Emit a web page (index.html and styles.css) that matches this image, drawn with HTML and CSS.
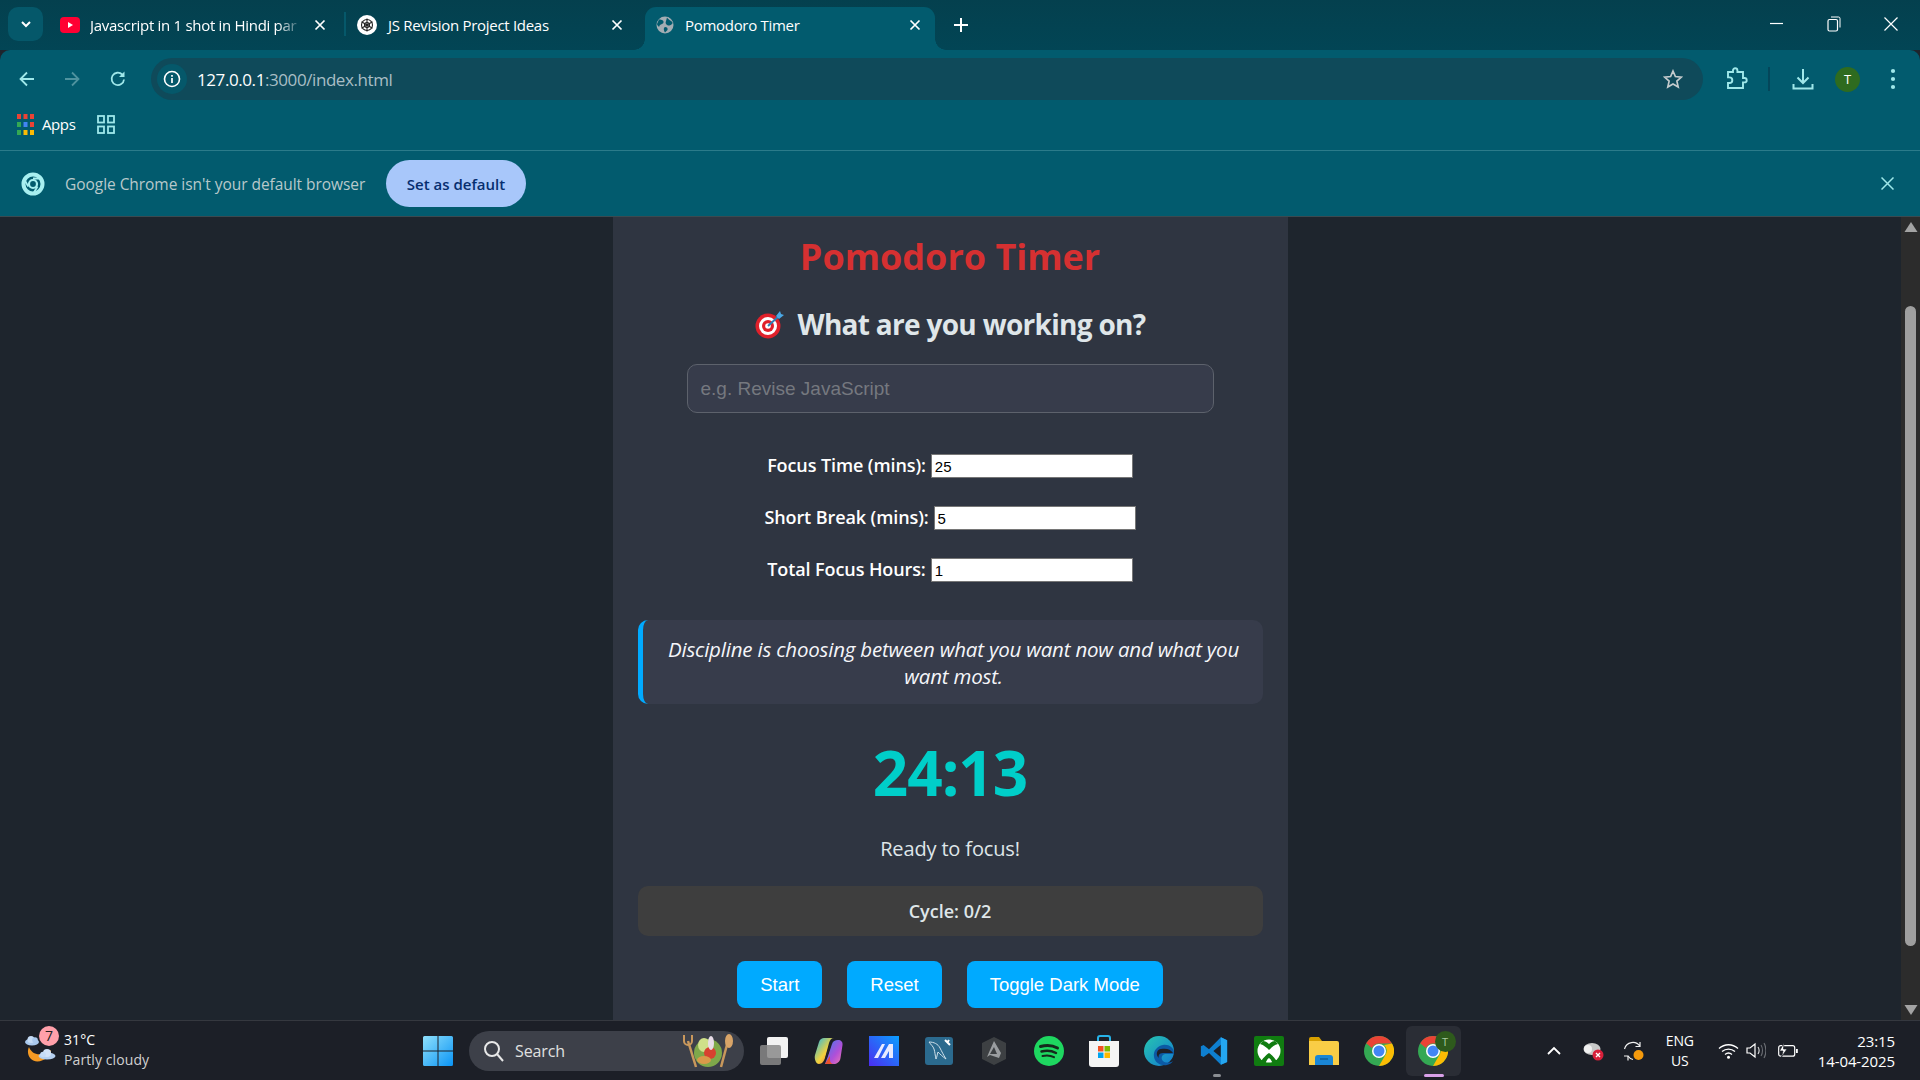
FILE: index.html
```html
<!DOCTYPE html>
<html lang="en">
<head>
<meta charset="utf-8">
<title>Pomodoro Timer</title>
<link rel="stylesheet" href="styles.css">
</head>
<body>
<header class="tabstrip">
  <button class="tabsearch"><svg width="14" height="14" viewBox="0 0 14 14"><path d="M3 5l4 4 4-4" fill="none" stroke="#fff" stroke-width="2"/></svg></button>
  <div class="tab tab-one">
    <svg class="favicon" width="20" height="20" viewBox="0 0 20 20"><rect y="2" width="20" height="16" rx="4" fill="#ff0033"/><path d="M8 7l5 3-5 3z" fill="#fff"/></svg>
    <span class="tabtitle fade">Javascript in 1 shot in Hindi par</span>
    <svg class="tabclose" width="12" height="12" viewBox="0 0 12 12"><path d="M1.500 1.500l9 9M10.500 1.500l-9 9" stroke="#fff" stroke-width="1.700"/></svg>
  </div>
  <div class="tabdiv"></div>
  <div class="tab tab-two">
    <svg class="favicon" width="20" height="20" viewBox="0 0 20 20"><circle cx="10" cy="10" r="10" fill="#fff"/><g fill="none" stroke="#222" stroke-width="1.100"><circle cx="10" cy="10" r="5.500"/><path d="M10 3.500v13M4.500 6.800l11 6.400M15.500 6.800l-11 6.400"/><circle cx="10" cy="10" r="2.500"/></g></svg>
    <span class="tabtitle">JS Revision Project Ideas</span>
    <svg class="tabclose" width="12" height="12" viewBox="0 0 12 12"><path d="M1.500 1.500l9 9M10.500 1.500l-9 9" stroke="#fff" stroke-width="1.700"/></svg>
  </div>
  <div class="tab tab-active">
    <svg class="favicon" width="18" height="18" viewBox="0 0 18 18"><circle cx="9" cy="9" r="8.500" fill="#a3adb3"/><path d="M3 3.500c3 0 5 1 4.500 3S4 8 3.500 10 1 9 1 8zM11 1.500c2 3 5 3.500 5.500 5S14 10 12 9.500 9 7 10 5zM9 11c2 0 3 1 2.500 3L9 16.500C8 15 7 12 9 11z" fill="#025b6e"/></svg>
    <span class="tabtitle">Pomodoro Timer</span>
    <svg class="tabclose" width="12" height="12" viewBox="0 0 12 12"><path d="M1.500 1.500l9 9M10.500 1.500l-9 9" stroke="#fff" stroke-width="1.700"/></svg>
  </div>
  <svg class="newtab" width="14" height="14" viewBox="0 0 14 14"><path d="M7 0v14M0 7h14" stroke="#fff" stroke-width="2"/></svg>
  <div class="winctl">
    <svg width="14" height="14" viewBox="0 0 14 14"><path d="M0 6.500h13" stroke="#fff" stroke-width="1.200"/></svg>
    <svg width="14" height="16" viewBox="0 0 14 16"><rect x="1" y="3.500" width="9.500" height="11.500" rx="1.500" fill="none" stroke="#fff" stroke-width="1.200"/><path d="M4 1h7.500a1.500 1.500 0 0 1 1.500 1.500v9" fill="none" stroke="#fff" stroke-width="1"/></svg>
    <svg width="14" height="14" viewBox="0 0 14 14"><path d="M.5.500l13 13M13.500.500l-13 13" stroke="#fff" stroke-width="1.200"/></svg>
  </div>
</header>

<nav class="toolbar">
  <svg class="navicon" width="18" height="18" viewBox="0 0 18 18"><path d="M16 9H3M9 2.500L2.500 9 9 15.500" fill="none" stroke="#9fe8ea" stroke-width="1.800"/></svg>
  <svg class="navicon" width="18" height="18" viewBox="0 0 18 18"><path d="M2 9h13M9 2.500L15.500 9 9 15.500" fill="none" stroke="#4f939f" stroke-width="1.800"/></svg>
  <svg class="navicon" width="18" height="18" viewBox="0 0 18 18"><path d="M15 9.500A6.200 6.200 0 1 1 13.200 4.500" fill="none" stroke="#9fe8ea" stroke-width="1.800"/><path d="M15.500 1.500v5.500H10z" fill="#9fe8ea"/></svg>
  <div class="omnibox">
    <span class="siteinfo"><svg width="18" height="18" viewBox="0 0 18 18"><circle cx="9" cy="9" r="7.500" fill="none" stroke="#fff" stroke-width="1.600"/><path d="M9 8v5M9 5v1.800" stroke="#fff" stroke-width="1.700"/></svg></span>
    <span class="url"><span class="host">127.0.0.1</span>:3000/index.html</span>
    <svg class="star" width="20" height="20" viewBox="0 0 20 20"><path d="M10 2l2.400 5.500 6 .6-4.500 4 1.300 5.900L10 15l-5.200 3 1.300-5.900-4.500-4 6-.6z" fill="none" stroke="#c4cbcd" stroke-width="1.700"/></svg>
  </div>
  <svg class="tool-ext" width="22" height="24" viewBox="0 0 22 24"><path d="M2 5h5V3.500a2.200 2.200 0 0 1 4.400 0V5H17v6h1.500a2.200 2.200 0 0 1 0 4.400H17V21H2v-5h1.500a2.800 2.800 0 0 0 0-5.600H2z" fill="none" stroke="#9fe8ea" stroke-width="1.900"/></svg>
  <span class="tooldiv"></span>
  <svg class="tool-dl" width="22" height="24" viewBox="0 0 22 24"><path d="M11 2v14M5.500 10.500L11 16l5.500-5.500" fill="none" stroke="#9fe8ea" stroke-width="2"/><path d="M1.500 17v4.500h19V17" fill="none" stroke="#9fe8ea" stroke-width="2"/></svg>
  <span class="avatar">T</span>
  <svg class="tool-menu" width="6" height="22" viewBox="0 0 6 22"><circle cx="3" cy="3" r="2.100" fill="#9fe8ea"/><circle cx="3" cy="11" r="2.100" fill="#9fe8ea"/><circle cx="3" cy="19" r="2.100" fill="#9fe8ea"/></svg>
</nav>

<div class="bookmarks">
  <svg class="appsgrid" width="17" height="21" viewBox="0 0 17 21"><g fill="#ea4335"><rect width="4" height="5"/><rect x="6.500" width="4" height="5"/><rect x="13" width="4" height="5"/></g><rect y="8" width="4" height="5" fill="#34a853"/><rect x="6.500" y="8" width="4" height="5" fill="#4285f4"/><rect x="13" y="8" width="4" height="5" fill="#ea4335"/><rect y="16" width="4" height="5" fill="#34a853"/><rect x="6.500" y="16" width="4" height="5" fill="#fbbc04"/><rect x="13" y="16" width="4" height="5" fill="#fbbc04"/></svg>
  <span class="bm-label">Apps</span>
  <svg class="groups" width="18" height="19" viewBox="0 0 18 19"><g fill="none" stroke="#9fe8ea" stroke-width="1.800"><rect x="1" y="1" width="6" height="6.500"/><rect x="11" y="1" width="6" height="6.500"/><rect x="1" y="11.500" width="6" height="6.500"/><rect x="11" y="11.500" width="6" height="6.500"/></g></svg>
</div>

<div class="infobar">
  <svg class="chromeglyph" width="24" height="24" viewBox="0 0 24 24"><circle cx="12" cy="12" r="9.500" fill="none" stroke="#a8eff0" stroke-width="4"/><circle cx="12" cy="12" r="4" fill="none" stroke="#a8eff0" stroke-width="2.200"/><path d="M12 6.500h9M7.300 14.500L3 7M16.500 14.500L12 22" stroke="#a8eff0" stroke-width="1.800"/></svg>
  <span class="infotext">Google Chrome isn't your default browser</span>
  <button class="setdefault">Set as default</button>
  <svg class="infoclose" width="13" height="13" viewBox="0 0 13 13"><path d="M.5.500l12 12M12.500.500l-12 12" stroke="#9fe8ea" stroke-width="1.500"/></svg>
</div>

<div class="viewport">
  <main class="stage">
    <section class="card">
      <h1 class="title">Pomodoro Timer</h1>
      <h2 class="goal">
        <svg width="30" height="30" viewBox="0 0 30 30"><circle cx="13" cy="17" r="12.500" fill="#e0202a"/><circle cx="13" cy="17" r="9" fill="#fff"/><circle cx="13" cy="17" r="6" fill="#e0202a"/><circle cx="13" cy="17" r="2.800" fill="#fff"/><path d="M13 17L25 6" stroke="#2f7fb5" stroke-width="2"/><path d="M21 7l4-5 1 3 3 1-5 4z" fill="#4aa8e6"/></svg>
        <span>What are you working on?</span>
      </h2>
      <input class="taskinput" type="text" placeholder="e.g. Revise JavaScript">
      <div class="setting"><label>Focus Time (mins):</label><input class="num" type="text" value="25"></div>
      <div class="setting"><label>Short Break (mins):</label><input class="num" type="text" value="5"></div>
      <div class="setting"><label>Total Focus Hours:</label><input class="num" type="text" value="1"></div>
      <blockquote class="quote">Discipline is choosing between what you want now and what you want most.</blockquote>
      <div class="timer">24:13</div>
      <p class="status">Ready to focus!</p>
      <div class="cycle">Cycle: 0/2</div>
      <div class="actions">
        <button class="btn">Start</button>
        <button class="btn">Reset</button>
        <button class="btn">Toggle Dark Mode</button>
      </div>
    </section>
  </main>
  <aside class="scrollbar">
    <svg width="14" height="10" viewBox="0 0 14 10"><path d="M7 0l6.500 10H.5z" fill="#a3a3a3"/></svg>
    <div class="scrolltrack"><div class="thumb"></div></div>
    <svg width="14" height="10" viewBox="0 0 14 10"><path d="M7 10L.5 0h13z" fill="#a3a3a3"/></svg>
  </aside>
</div>

<footer class="taskbar">
  <div class="weather">
    <div class="wx-icon">
      <svg width="36" height="36" viewBox="0 0 36 36"><path d="M6 13c3 8 12 10 22 3 0 3-1 5-3 7-6 5-13 6-17 2-3-3-4-8-2-12z" fill="#f59a23"/><ellipse cx="9" cy="8" rx="7" ry="3.500" fill="#a9c9ee"/><circle cx="8" cy="5.500" r="3.500" fill="#c6dcf6"/><circle cx="12" cy="6" r="2.800" fill="#a9c9ee"/><ellipse cx="24" cy="22" rx="8.500" ry="3.500" fill="#b5d0f0"/><circle cx="24" cy="19" r="4" fill="#d3e3f8"/><circle cx="20" cy="20.500" r="2.800" fill="#c6dcf6"/></svg>
      <span class="badge">7</span>
    </div>
    <div class="wx-text"><span>31°C</span><span class="wx-sub">Partly cloudy</span></div>
  </div>
  <div class="dock">
    <svg class="winlogo" width="30" height="30" viewBox="0 0 30 30"><defs><linearGradient id="w" x1="0" y1="0" x2="1" y2="1"><stop offset="0" stop-color="#8fe0fb"/><stop offset="1" stop-color="#0a94f5"/></linearGradient></defs><path d="M0 1.500A1.500 1.500 0 0 1 1.500 0h13v14.500H0zM15.500 0h13A1.500 1.500 0 0 1 30 1.500v13H15.500zM0 15.500h14.500V30h-13A1.500 1.500 0 0 1 0 28.500zM15.500 15.500H30v13a1.500 1.500 0 0 1-1.500 1.500h-13z" fill="url(#w)"/></svg>
    <div class="searchbox">
      <svg width="22" height="22" viewBox="0 0 22 22"><circle cx="9" cy="9" r="7" fill="none" stroke="#e8e8e8" stroke-width="2"/><path d="M14 14l6 7" stroke="#e8e8e8" stroke-width="2"/></svg>
      <span class="searchword">Search</span>
      <svg class="salad" width="52" height="36" viewBox="0 0 52 36"><path d="M6 8l8 26" stroke="#c9985c" stroke-width="2.500"/><path d="M46 8l-7 26" stroke="#c9985c" stroke-width="2.500"/><ellipse cx="47" cy="8" rx="4" ry="7" fill="#d8a468"/><path d="M2 2v6a4 4 0 0 0 8 0V2" stroke="#c9985c" stroke-width="2" fill="none"/><circle cx="26" cy="20" r="14" fill="#7fa84a"/><ellipse cx="22" cy="12" rx="6" ry="7" fill="#cfe08a"/><circle cx="28" cy="20" r="6" fill="#d8412f"/><ellipse cx="29" cy="10" rx="3" ry="7" fill="#e8dde8"/><ellipse cx="22" cy="27" rx="7" ry="4" fill="#d99a4a"/></svg>
    </div>
    <div class="dockicons">
      <span class="app"><svg width="30" height="30" viewBox="0 0 30 30"><rect x="8" y="1" width="21" height="21" rx="2" fill="#f2f2f2"/><rect x="1" y="9" width="21" height="20" rx="2" fill="#8a8a8a" fill-opacity=".85"/></svg></span>
      <span class="app"><svg width="30" height="28" viewBox="0 0 30 28"><defs><linearGradient id="c1" x1="0" y1="0" x2="1" y2="1"><stop offset="0" stop-color="#1fb6e8"/><stop offset=".55" stop-color="#f4d23c"/><stop offset="1" stop-color="#f0553a"/></linearGradient><linearGradient id="c2" x1="0" y1="0" x2="1" y2="1"><stop offset="0" stop-color="#3a7df0"/><stop offset=".6" stop-color="#b04fd8"/><stop offset="1" stop-color="#f07ab0"/></linearGradient></defs><path d="M20 27h-9l3-8 4-12c1-3 3-4 6-4 3 0 5 2 4.500 5l-2 13c-.5 4-4 6-6.500 6z" fill="url(#c2)"/><path d="M10 1h10c-3 0-4 2-5 5l-4 15c-1 3-3 6-6 6-3 0-5-5-4-9L5 5c1-3 3-4 5-4z" fill="url(#c1)"/><path d="M11 27h9c-3 0-4-2-4-4l0-4-5 8z" fill="#e8532c"/><path d="M16 8l-4 13" stroke="#23242c" stroke-width="1.500"/></svg></span>
      <span class="app"><svg width="30" height="30" viewBox="0 0 30 30"><defs><linearGradient id="m" x1="0" y1="1" x2="1" y2="0"><stop offset="0" stop-color="#4b2cf0"/><stop offset="1" stop-color="#0aa0ff"/></linearGradient></defs><rect width="30" height="30" fill="url(#m)"/><path d="M5 22l8-14h3L9 22zM12 22l8-14h4v14h-4v-7l-4 7z" fill="#e8eaff"/></svg></span>
      <span class="app"><svg width="28" height="28" viewBox="0 0 28 28"><rect width="28" height="28" rx="3" fill="#2b6a8e"/><path d="M4 5c5 0 9 2 11 6s3 6 6 11c-3-2-6-5-8-7-1 3-1 5-2 7-1-4-1-7-2-10S6 8 4 5z" fill="none" stroke="#cfe0ea" stroke-width="1"/><path d="M20 3l5 5M24 3l-2 3" stroke="#fff" stroke-width="2"/></svg></span>
      <span class="app"><svg width="26" height="28" viewBox="0 0 26 28"><path d="M13 0l12 6v16l-12 6-12-6V6z" fill="#3d4043"/><path d="M13 4l7 12-2 5-9-3-3 2 3-7z" fill="#9a9da0"/><path d="M13 10l3 7H9z" fill="#3d4043"/></svg></span>
      <span class="app"><svg width="30" height="30" viewBox="0 0 30 30"><circle cx="15" cy="15" r="15" fill="#1ed760"/><g fill="none" stroke="#15291c" stroke-linecap="round"><path d="M6.500 10.500c6-1.800 12-1.300 17 1.500" stroke-width="3"/><path d="M7.500 15.500c5-1.400 10-1 14.500 1.500" stroke-width="2.500"/><path d="M8.500 20c4-1 8-.7 11.500 1.200" stroke-width="2"/></g></svg></span>
      <span class="app"><svg width="30" height="32" viewBox="0 0 30 32"><path d="M9 6V3a2 2 0 0 1 2-2h8a2 2 0 0 1 2 2v3" fill="none" stroke="#27b3e8" stroke-width="2"/><path d="M0 6h30v23a3 3 0 0 1-3 3H3a3 3 0 0 1-3-3z" fill="#f4f4f4"/><rect x="9" y="11" width="5.500" height="5.500" fill="#f25022"/><rect x="15.500" y="11" width="5.500" height="5.500" fill="#7fba00"/><rect x="9" y="17.500" width="5.500" height="5.500" fill="#00a4ef"/><rect x="15.500" y="17.500" width="5.500" height="5.500" fill="#ffb900"/></svg></span>
      <span class="app"><svg width="30" height="30" viewBox="0 0 30 30"><defs><linearGradient id="e" x1="0" y1="0" x2="1" y2="1"><stop offset="0" stop-color="#27c6b0"/><stop offset="1" stop-color="#1279d0"/></linearGradient></defs><circle cx="15" cy="15" r="15" fill="url(#e)"/><path d="M30 17c0-6-6-9-11-8-6 1-10 6-9 12s7 9 13 8c3-1 5-2 6-4-3 2-8 2-10 0-2-2-2-6 2-7h9z" fill="#0c59a4"/><path d="M29 17H19c-4 0-5 3-4 5-4-3-2-9 2-9 5-1 10 0 12 4z" fill="#1f2027"/></svg></span>
      <span class="app"><svg width="30" height="30" viewBox="0 0 24 24"><path d="M17.500 1 8 10.500 3.700 7.200 1.500 8.200v7.600l2.200 1 4.300-3.300L17.500 23l5-2.300V3.300zM17.500 7v10l-6-5z" fill="#0e7fd0" fill-rule="evenodd"/><path d="M17.500 1l5 2.300v17.400l-5 2.300z" fill="#24a6f0"/></svg></span>
      <span class="app"><svg width="30" height="30" viewBox="0 0 30 30"><rect width="30" height="30" rx="2" fill="#107c10"/><circle cx="15" cy="15" r="11.500" fill="#fff"/><path d="M6 8c4 1 7 4 9 6 2-2 5-5 9-6l-3-3c-2 0-4 1-6 3-2-2-4-3-6-3zM15 17c-3 2-7 6-8 9l4 2c1-2 2-5 4-6 2 1 3 4 4 6l4-2c-1-3-5-7-8-9z" fill="#107c10"/></svg></span>
      <span class="app"><svg width="30" height="28" viewBox="0 0 30 28"><path d="M0 2a2 2 0 0 1 2-2h8l3 4h-13z" fill="#d8a000"/><path d="M0 4h28a2 2 0 0 1 2 2v22H0z" fill="#f9cd46"/><path d="M6 21a3 3 0 0 1 3-3h12a3 3 0 0 1 3 3v7H6z" fill="#1a86d6"/><path d="M11 22h8" stroke="#0f5e9c" stroke-width="1.500"/></svg></span>
      <span class="app"><svg width="30" height="30" viewBox="0 0 30 30"><circle cx="15" cy="15" r="15" fill="#34a853"/><path d="M15 0a15 15 0 0 1 13 7.500H15a7.500 7.500 0 0 0-7 4.600L2.200 7.200A15 15 0 0 1 15 0z" fill="#ea4335"/><path d="M28 7.500A15 15 0 0 1 15 30l6.500-11.200A7.500 7.500 0 0 0 20 9z" fill="#fbbc04"/><circle cx="15" cy="15" r="7" fill="#fff"/><circle cx="15" cy="15" r="5.500" fill="#4285f4"/></svg></span>
      <span class="app app-active"><span class="chromewrap"><svg width="30" height="30" viewBox="0 0 30 30"><circle cx="15" cy="15" r="15" fill="#34a853"/><path d="M15 0a15 15 0 0 1 13 7.500H15a7.500 7.500 0 0 0-7 4.600L2.200 7.200A15 15 0 0 1 15 0z" fill="#ea4335"/><path d="M28 7.500A15 15 0 0 1 15 30l6.500-11.200A7.500 7.500 0 0 0 20 9z" fill="#fbbc04"/><circle cx="15" cy="15" r="7" fill="#fff"/><circle cx="15" cy="15" r="5.500" fill="#4285f4"/></svg><span class="miniavatar">T</span></span></span>
    </div>
    <span class="dot-vscode"></span>
    <span class="dot-chrome"></span>
  </div>
  <div class="tray">
    <svg class="t-chev" width="14" height="9" viewBox="0 0 14 9"><path d="M1 8l6-6 6 6" fill="none" stroke="#fff" stroke-width="1.800"/></svg>
    <span class="t-cloud"><svg width="22" height="20" viewBox="0 0 22 20"><ellipse cx="9" cy="8" rx="8.500" ry="6" fill="#c9c9c9"/><circle cx="5" cy="8" r="4" fill="#f1f1f1"/><circle cx="15" cy="14" r="5.500" fill="#d8203a"/><path d="M13 12l4 4M17 12l-4 4" stroke="#fff" stroke-width="1.300"/></svg></span>
    <span class="t-sync"><svg width="22" height="22" viewBox="0 0 22 22"><path d="M1.500 9A8.500 8.500 0 0 1 17 6.500M17 2v4.500h-4.500M1 16h4.500M5 20.500V16" fill="none" stroke="#f0f0f0" stroke-width="1.200"/><path d="M5 16a8 8 0 0 0 5 3.500" fill="none" stroke="#f0f0f0" stroke-width="1.200"/><circle cx="15.500" cy="15" r="5" fill="#f59a0c"/></svg></span>
    <div class="lang"><span>ENG</span><span>US</span></div>
    <svg class="t-wifi" width="21" height="16" viewBox="0 0 21 16"><g fill="none" stroke="#fff" stroke-width="1.300"><path d="M1 5.500c5.500-5 13.500-5 19 0"/><path d="M4 8.500c3.800-3.300 9.200-3.300 13 0"/><path d="M7 11.500c2-1.700 5-1.700 7 0"/></g><circle cx="10.500" cy="14.300" r="1.500" fill="#fff"/></svg>
    <svg class="t-vol" width="20" height="17" viewBox="0 0 20 17"><path d="M1 6v5h3l5 4V2L4 6z" fill="none" stroke="#fff" stroke-width="1.200"/><path d="M12 5c1.300 2 1.300 5 0 7" fill="none" stroke="#ddd" stroke-width="1.100"/><path d="M15 3c2 3 2 8 0 11M18 1c2.500 4 2.500 11 0 15" fill="none" stroke="#6b6e74" stroke-width="1.100"/></svg>
    <svg class="t-bat" width="20" height="15" viewBox="0 0 20 15"><rect x=".7" y="2.700" width="16" height="10.500" rx="2" fill="none" stroke="#fff" stroke-width="1.200"/><rect x="18" y="6" width="1.800" height="4" fill="#fff"/><path d="M6 0L1.500 8H5l-1.500 6L9 6H5.500z" fill="#fff" stroke="#1c1f27" stroke-width=".7"/></svg>
    <div class="clock"><span>23:15</span><span>14-04-2025</span></div>
  </div>
</footer>
</body>
</html>
```

FILE: styles.css
```css
* { box-sizing: border-box; }
html, body { margin: 0; height: 100%; }
body {
  width: 1920px;
  height: 1080px;
  overflow: hidden;
  display: flex;
  flex-direction: column;
  background: #1e252d;
  font-family: "Open Sans", "Noto Sans", sans-serif;
  color: #fff;
}
button { font-family: inherit; border: 0; padding: 0; }

/* tab strip */
.tabstrip {
  height: 50px;
  flex: none;
  display: flex;
  align-items: center;
  background: linear-gradient(#04404e, #024555);
  position: relative;
  padding-left: 8px;
}
.tabsearch {
  width: 35px;
  height: 34px;
  margin-top: -2px;
  border-radius: 10px;
  background: #05586a;
  display: flex;
  align-items: center;
  justify-content: center;
}
.tab {
  display: flex;
  align-items: center;
  height: 43px;
  margin-top: 7px;
  font-size: 15px;
}
.favicon { flex: none; margin-top: -7px; }
.tabtitle { white-space: nowrap; margin-top: -7px; letter-spacing: -.3px; }
.tabclose { flex: none; margin-top: -7px; }
.tab-one { width: 301px; padding-left: 17px; }
.tab-one .tabtitle { width: 213px; margin-left: 10px; margin-right: 11px; }
.fade { -webkit-mask-image: linear-gradient(90deg, #000 88%, transparent); mask-image: linear-gradient(90deg, #000 88%, transparent); }
.tabdiv { width: 2px; height: 24px; background: #05586a; margin: -2px 0 0 0; }
.tab-two { width: 299px; padding-left: 11px; }
.tab-two .tabtitle { width: 223px; margin-left: 11px; }
.tab-active {
  width: 290px;
  padding-left: 11px;
  background: #025b6e;
  border-radius: 11px 11px 0 0;
  position: relative;
}
.tab-active .tabtitle { width: 224px; margin-left: 11px; }
.tab-active::before, .tab-active::after {
  content: "";
  position: absolute;
  bottom: 0;
  width: 11px;
  height: 11px;
  background: radial-gradient(circle at 0 0, transparent 10.500px, #025b6e 11px);
}
.tab-active::before { left: -11px; }
.tab-active::after { right: -11px; background: radial-gradient(circle at 100% 0, transparent 10.500px, #025b6e 11px); }
.newtab { margin-left: 19px; margin-top: -1px; }
.winctl {
  margin-left: auto;
  margin-right: 22px;
  margin-top: -2px;
  display: flex;
  gap: 43px;
  align-items: center;
}

/* toolbar */
.toolbar {
  height: 50px;
  flex: none;
  display: flex;
  align-items: center;
  background: #025b6e;
  padding: 0 0 0 18px;
  border-radius: 10px 10px 0 0;
}
.navicon { margin-right: 27px; flex: none; }
.navicon:nth-child(2) { margin-right: 28px; }
.navicon:nth-child(3) { margin-right: 24px; }
.omnibox {
  width: 1552px;
  height: 42px;
  margin-top: 8px;
  border-radius: 21px;
  background: #0f4a5a;
  display: flex;
  align-items: center;
  padding-left: 6px;
  flex: none;
}
.toolbar > svg:not(.star) { margin-top: 8px; }
.siteinfo {
  width: 30px;
  height: 30px;
  border-radius: 50%;
  background: #05586a;
  display: flex;
  align-items: center;
  justify-content: center;
  flex: none;
}
.url { margin-left: 10px; font-size: 17px; color: #a9bec5; letter-spacing: -.42px; }
.host { color: #fff; }
.star { margin-left: auto; margin-right: 20px; }
.tool-ext { margin-left: 23px; }
.tooldiv { width: 2px; height: 24px; background: #04465a; margin: 8px 0 0 20px; flex: none; }
.tool-dl { margin-left: 22px; }
.avatar {
  width: 25px;
  height: 25px;
  margin: 8px 0 0 21px;
  border-radius: 50%;
  background: #2e6b1f;
  font-size: 13px;
  display: flex;
  align-items: center;
  justify-content: center;
  flex: none;
}
.tool-menu { margin-left: 30px; }

/* bookmarks */
.bookmarks {
  height: 51px;
  flex: none;
  display: flex;
  align-items: center;
  padding: 0 0 2px 17px;
  background: #025b6e;
  border-bottom: 1px solid #2b7b8a;
}
.bm-label { margin-left: 8px; font-size: 15px; letter-spacing: -.4px; }
.groups { margin-left: 22px; }

/* infobar */
.infobar {
  height: 66px;
  flex: none;
  display: flex;
  align-items: center;
  background: #025b6e;
  border-bottom: 1px solid #3a4a50;
  padding-left: 21px;
  position: relative;
}
.infotext { margin-left: 20px; font-size: 15.500px; color: #b8c9cb; letter-spacing: -.05px; white-space: nowrap; width: 321px; }
.setdefault {
  width: 140px;
  height: 47px;
  border-radius: 24px;
  background: #a8c7fa;
  color: #062e6f;
  font-size: 15px;
  font-weight: 600;
}
.infoclose { margin-left: auto; margin-right: 26px; }

/* page */
.viewport {
  flex: 1;
  min-height: 0;
  display: flex;
  overflow: hidden;
  background: #1e252d;
}
.stage { flex: 1; display: flex; justify-content: center; }
.card {
  width: 675px;
  height: 803px;
  flex: none;
  background: #2f3541;
  padding: 0 25px;
  margin-left: -1px;
  text-align: center;
  overflow: hidden;
}
.title {
  margin: 16px 0 0;
  color: #d63031;
  font-size: 36px;
  font-weight: 700;
  line-height: 48px;
}
.goal {
  margin: 23px 0 0;
  height: 40px;
  display: flex;
  align-items: center;
  justify-content: center;
  gap: 13px;
  color: #dfe6e9;
  font-size: 28px;
  font-weight: 700;
  letter-spacing: -.7px;
  white-space: nowrap;
}
.taskinput {
  display: block;
  width: 527px;
  height: 49px;
  margin: 20px auto 0;
  padding: 0 13px;
  border: 1px solid #5d626c;
  border-radius: 10px;
  background: #373c4b;
  color: #fff;
  font: 19px "Liberation Sans", sans-serif;
  outline: none;
}
.taskinput::placeholder { color: #75787f; opacity: 1; }
.setting {
  height: 24px;
  margin-top: 28px;
  display: flex;
  align-items: center;
  justify-content: center;
  gap: 5px;
}
.taskinput + .setting { margin-top: 41px; }
.setting label { font-size: 18px; font-weight: 600; letter-spacing: -.1px; white-space: nowrap; margin-top: -3px; }
.num {
  width: 202px;
  height: 24px;
  padding: 1px 3px;
  border: 1px solid #767676;
  background: #fff;
  color: #000;
  font: 15px "Liberation Sans", sans-serif;
}
.quote {
  margin: 38px 0 0;
  height: 84px;
  padding: 16px 18px 0 20px;
  border-left: 5px solid #00aaff;
  border-radius: 10px;
  background: #373c4b;
  color: #f5f6fa;
  font-size: 20.500px;
  font-style: italic;
  line-height: 27px;
  letter-spacing: -.2px;
}
.timer {
  margin-top: 28px;
  height: 80px;
  color: #00cec9;
  font-size: 62px;
  font-weight: 700;
  line-height: 80px;
  letter-spacing: -1px;
}
.status {
  margin: 23px 0 0;
  font-size: 20px;
  line-height: 28px;
  color: #dfe6e9;
  letter-spacing: -.15px;
}
.cycle {
  margin-top: 23px;
  height: 50px;
  border-radius: 10px;
  background: #3e3e3e;
  color: #dfe6e9;
  font-size: 18px;
  font-weight: 600;
  line-height: 50px;
}
.actions {
  margin-top: 25px;
  display: flex;
  justify-content: center;
  gap: 25px;
}
.btn {
  height: 47px;
  padding: 0 23px;
  border-radius: 8px;
  background: #00aaff;
  color: #fff;
  font: 18.500px "Liberation Sans", sans-serif;
}
.scrollbar {
  width: 19px;
  flex: none;
  background: #2c2c2c;
  display: flex;
  flex-direction: column;
  align-items: center;
  padding: 5px 0;
}
.scrolltrack { flex: 1; width: 100%; display: flex; justify-content: center; padding-top: 74px; padding-bottom: 59px; }
.thumb { width: 11px; height: 100%; border-radius: 6px; background: #9f9f9f; }

/* taskbar */
.taskbar {
  height: 60px;
  flex: none;
  display: flex;
  background: #1c1f27;
  border-top: 1px solid #35383f;
  position: relative;
}
.weather { width: 423px; flex: none; display: flex; align-items: center; padding-left: 23px; }
.wx-icon { position: relative; width: 41px; height: 36px; margin-top: 2px; flex: none; }
.badge {
  position: absolute;
  left: 16px;
  top: -8px;
  width: 20px;
  height: 20px;
  border-radius: 50%;
  background: #ffa0aa;
  color: #222;
  font-size: 14px;
  text-align: center;
  line-height: 20px;
}
.wx-text { display: flex; flex-direction: column; font-size: 14px; line-height: 20px; margin-top: -2px; letter-spacing: .1px; }
.wx-sub { color: #d0d0d0; }
.dock { display: flex; align-items: center; position: relative; }
.winlogo { flex: none; }
.searchbox {
  width: 275px;
  height: 40px;
  margin-left: 16px;
  padding: 0 10px 0 14px;
  border-radius: 20px;
  background: #3d4049;
  display: flex;
  align-items: center;
  flex: none;
}
.searchword { margin-left: 10px; font-size: 16px; color: #e0e0e0; letter-spacing: -.1px; }
.salad { margin-left: auto; }
.dockicons { display: flex; align-items: center; margin-left: 2px; }
.app { width: 55px; height: 56px; display: flex; align-items: center; justify-content: center; flex: none; }
.app-active { background: #2a2d35; border-radius: 6px; height: 50px; }
.chromewrap { position: relative; display: flex; margin-left: -2px; }
.miniavatar {
  position: absolute;
  right: -8px;
  top: -5px;
  width: 21px;
  height: 21px;
  border-radius: 50%;
  background: #2e5a1c;
  color: #a8c8a0;
  font-size: 11px;
  text-align: center;
  line-height: 21px;
}
.dot-vscode {
  position: absolute;
  left: 790px;
  bottom: 3px;
  width: 8px;
  height: 3px;
  border-radius: 2px;
  background: #8a8d92;
}
.dot-chrome {
  position: absolute;
  left: 1001px;
  bottom: 3px;
  width: 20px;
  height: 3px;
  border-radius: 2px;
  background: #d8a0e8;
}
.tray { margin-left: auto; display: flex; align-items: center; padding-right: 25px; }
.t-chev { margin-right: 22px; }
.t-cloud { display: flex; margin-right: 18px; }
.t-sync { display: flex; margin-right: 21px; }
.lang { display: flex; flex-direction: column; align-items: center; font-size: 14px; line-height: 20px; margin-right: 24px; letter-spacing: -.2px; }
.t-wifi { margin-right: 7px; }
.t-vol { margin-right: 12px; }
.t-bat { margin-right: 20px; }
.clock { display: flex; flex-direction: column; align-items: flex-end; font-size: 15px; line-height: 20px; letter-spacing: -.1px; }
```
